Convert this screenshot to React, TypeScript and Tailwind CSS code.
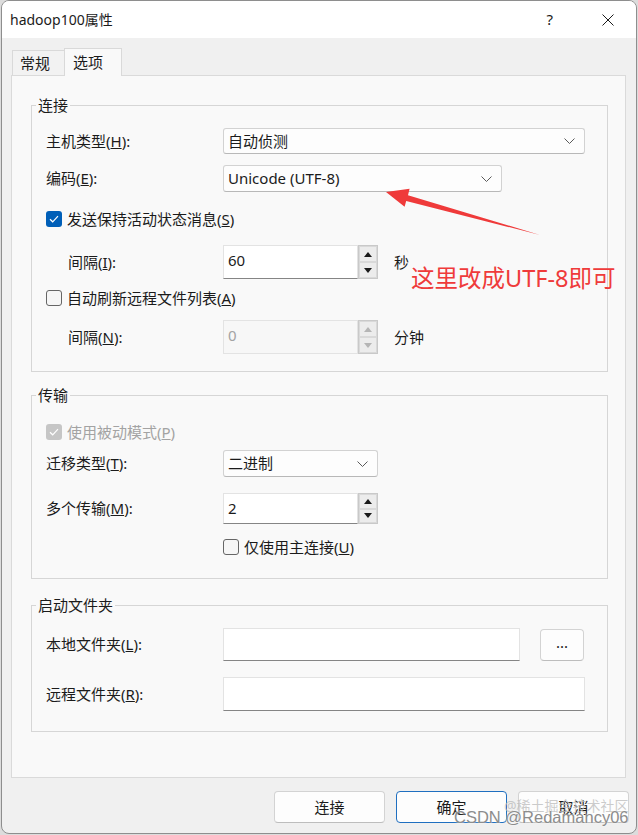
import React from "react";

const Chevron = () => (
  <svg width="11" height="6" viewBox="0 0 11 6" className="shrink-0">
    <path d="M0.5 0.5 L5.5 5.5 L10.5 0.5" fill="none" stroke="#5a5a5a" strokeWidth="1" />
  </svg>
);

const Select = ({ value, className }: { value: string; className: string }) => (
  <div
    className={`flex items-center justify-between pl-[4px] pr-[9px] bg-[#fdfdfd] border border-[#d2d2d2] border-b-[#b8b8b8] rounded-[3px] text-[15px] text-[#1b1b1b] ${className}`}
  >
    <span>{value}</span>
    <Chevron />
  </div>
);

const Tri = ({ up, disabled }: { up?: boolean; disabled?: boolean }) => (
  <svg width="8" height="5" viewBox="0 0 8 5">
    <path d={up ? "M0 5 L4 0 L8 5 Z" : "M0 0 L4 5 L8 0 Z"} fill={disabled ? "#b5b5b5" : "#1a1a1a"} />
  </svg>
);

const SpinInput = ({ value, className, disabled }: { value: string; className: string; disabled?: boolean }) => (
  <div className={`flex w-[155px] ${className}`}>
    <div
      className={
        disabled
          ? "flex-1 pl-[4px] pt-[4px] border border-[#e3e3e3] bg-[#f7f7f7] text-[15px] leading-[20px] text-[#a3a3a3]"
          : "flex-1 pl-[4px] pt-[4px] border border-[#e3e3e3] border-b-[#858585] bg-white text-[15px] leading-[20px] text-[#1b1b1b]"
      }
    >
      {value}
    </div>
    <div className="flex flex-col w-[20px] border border-[#c9c9c9] bg-[#f3f3f3]">
      <div className="flex-1 flex items-center justify-center border border-[#d9d9d9] bg-[#ececec]">
        <Tri up disabled={disabled} />
      </div>
      <div className="flex-1 flex items-center justify-center border border-[#d9d9d9] bg-[#ececec]">
        <Tri disabled={disabled} />
      </div>
    </div>
  </div>
);

const Check = ({ checked, disabled }: { checked?: boolean; disabled?: boolean }) => {
  if (checked) {
    return (
      <div
        className={`w-[16px] h-[16px] rounded-[3px] flex items-center justify-center shrink-0 ${
          disabled ? "bg-[#c6c6c6]" : "bg-[#005fb8]"
        }`}
      >
        <svg width="10" height="8" viewBox="0 0 10 8">
          <path d="M1 4.2 L3.7 6.8 L9 1.2" fill="none" stroke="white" strokeWidth="1.2" />
        </svg>
      </div>
    );
  }
  return <div className="w-[16px] h-[16px] rounded-[3px] border border-[#666666] bg-[#f6f6f6] shrink-0" />;
};

const Legend = ({ children }: { children: React.ReactNode }) => (
  <legend className="-ml-[10px] px-[2px] text-[15px] leading-[20px] text-[#1b1b1b]">{children}</legend>
);

const Btn = ({ children, primary }: { children: React.ReactNode; primary?: boolean }) => (
  <div
    className={`w-[111px] h-[32px] flex items-center justify-center rounded-[4px] bg-[#fdfdfd] text-[15px] text-[#1b1b1b] border ${
      primary ? "border-[#1f6fc0]" : "border-[#d3d3d3] border-b-[#bdbdbd]"
    }`}
  >
    {children}
  </div>
);

export default function App() {
  return (
    <div className="w-[638px] h-[835px] bg-[#dcdcdc] font-['Noto_Sans','Noto_Sans_CJK_SC',sans-serif] overflow-hidden">
      <div className="relative ml-px w-[636px] h-[834px] border border-[#8e8e8e] rounded-[8px] overflow-hidden bg-[#f0f0f0] flex flex-col">
        {/* title bar */}
        <div className="h-[37px] bg-white flex items-center shrink-0">
          <span className="ml-[8px] text-[14px] text-[#1b1b1b]">hadoop100属性</span>
          <span className="ml-auto mr-[49px] text-[15px] text-[#1b1b1b]">?</span>
          <svg width="12" height="12" viewBox="0 0 12 12" className="mr-[22px]">
            <path d="M0.5 0.5 L11.5 11.5 M11.5 0.5 L0.5 11.5" stroke="#1b1b1b" strokeWidth="1" />
          </svg>
        </div>

        {/* tabs */}
        <div className="h-[37px] flex items-end ml-[10px] shrink-0">
          <div className="w-[53px] h-[25px] pl-[7px] border border-b-0 border-[#d9d9d9] bg-[#f2f2f2] text-[15px] leading-[24px] text-[#1b1b1b]">
            常规
          </div>
          <div className="relative z-10 -ml-px -mb-px w-[58px] h-[28px] pl-[8px] border border-b-0 border-[#d9d9d9] bg-[#f9f9f9] text-[15px] leading-[27px] text-[#1b1b1b]">
            选项
          </div>
        </div>

        {/* panel */}
        <div className="ml-[9px] w-[615px] border border-[#dadada] bg-[#f9f9f9] pt-[19px] pb-[45px] pl-[19px] shrink-0">
          <fieldset className="w-[577px] border border-[#d6d6d6] pl-[14px] pb-[17px] text-[15px] text-[#1b1b1b]">
            <Legend>连接</Legend>
            <div className="mt-[13px] flex items-center h-[26px]">
              <span className="w-[177px] shrink-0">
                主机类型(<u>H</u>):
              </span>
              <Select value="自动侦测" className="w-[362px] h-[26px]" />
            </div>
            <div className="mt-[11px] flex items-center h-[27px]">
              <span className="w-[177px] shrink-0">
                编码(<u>E</u>):
              </span>
              <Select value="Unicode (UTF-8)" className="w-[279px] h-[27px]" />
            </div>
            <div className="mt-[19px] flex items-center gap-[5px] h-[16px]">
              <Check checked />
              <span>
                发送保持活动状态消息(<u>S</u>)
              </span>
            </div>
            <div className="mt-[18px] flex items-center h-[34px]">
              <span className="w-[177px] pl-[22px] shrink-0">
                间隔(<u>I</u>):
              </span>
              <SpinInput value="60" className="h-[34px]" />
              <span className="ml-[16px]">秒</span>
            </div>
            <div className="mt-[11px] flex items-center gap-[5px] h-[16px]">
              <Check />
              <span>
                自动刷新远程文件列表(<u>A</u>)
              </span>
            </div>
            <div className="mt-[14px] flex items-center h-[34px]">
              <span className="w-[177px] pl-[22px] shrink-0">
                间隔(<u>N</u>):
              </span>
              <SpinInput value="0" disabled className="h-[34px]" />
              <span className="ml-[16px]">分钟</span>
            </div>
          </fieldset>

          <fieldset className="mt-[13px] w-[577px] border border-[#d6d6d6] pl-[14px] pb-[23px] text-[15px] text-[#1b1b1b]">
            <Legend>传输</Legend>
            <div className="mt-[19px] flex items-center gap-[5px] h-[16px]">
              <Check checked disabled />
              <span className="text-[#a3a3a3]">
                使用被动模式(<u>P</u>)
              </span>
            </div>
            <div className="mt-[10px] flex items-center h-[27px]">
              <span className="w-[177px] shrink-0">
                迁移类型(<u>T</u>):
              </span>
              <Select value="二进制" className="w-[155px] h-[27px]" />
            </div>
            <div className="mt-[16px] flex items-center h-[31px]">
              <span className="w-[177px] shrink-0">
                多个传输(<u>M</u>):
              </span>
              <SpinInput value="2" className="h-[31px]" />
            </div>
            <div className="mt-[15px] flex items-center gap-[5px] h-[16px] pl-[177px]">
              <Check />
              <span>
                仅使用主连接(<u>U</u>)
              </span>
            </div>
          </fieldset>

          <fieldset className="mt-[16px] w-[577px] border border-[#d6d6d6] pl-[14px] pb-[20px] text-[15px] text-[#1b1b1b]">
            <Legend>启动文件夹</Legend>
            <div className="mt-[13px] flex items-center h-[33px]">
              <span className="w-[177px] shrink-0">
                本地文件夹(<u>L</u>):
              </span>
              <div className="w-[297px] h-[33px] border border-[#e3e3e3] border-b-[#858585] bg-white" />
              <div className="ml-[20px] w-[44px] h-[32px] flex items-center justify-center rounded-[4px] border border-[#d3d3d3] border-b-[#bdbdbd] bg-[#fdfdfd] leading-none pb-[4px]">
                ...
              </div>
            </div>
            <div className="mt-[16px] flex items-center h-[34px]">
              <span className="w-[177px] shrink-0">
                远程文件夹(<u>R</u>):
              </span>
              <div className="w-[362px] h-[34px] border border-[#e3e3e3] border-b-[#858585] bg-white" />
            </div>
          </fieldset>
        </div>

        {/* buttons */}
        <div className="mt-[13px] flex justify-end gap-[11px] pr-[7px]">
          <Btn>连接</Btn>
          <Btn primary>确定</Btn>
          <Btn>取消</Btn>
        </div>

        {/* annotation and watermark overlay */}
        <div className="absolute inset-0 pointer-events-none">
          <svg width="636" height="834" className="absolute left-[-2px] top-[-1px]">
            <polygon
              points="386,192 409.6,188.8 408,195.2 540,235 406.2,201 404.6,206.8"
              fill="#ef3a3a"
            />
          </svg>
          <span className="absolute left-[409px] top-[260px] text-[23.5px] leading-[34px] text-[#ef3b3b] whitespace-nowrap">
            这里改成UTF-8即可
          </span>
          <span className="absolute left-[502px] top-[795px] text-[14px] leading-[20px] text-[#bdbdbd]/80 whitespace-nowrap">
            @稀土掘金技术社区
          </span>
          <span className="absolute left-[452px] top-[805px] text-[16.5px] leading-[22px] text-[#8c8c8c] whitespace-nowrap font-['Liberation_Sans',sans-serif] [text-shadow:0_0_2px_white]">
            CSDN @Redamancy06
          </span>
        </div>
      </div>
    </div>
  );
}
